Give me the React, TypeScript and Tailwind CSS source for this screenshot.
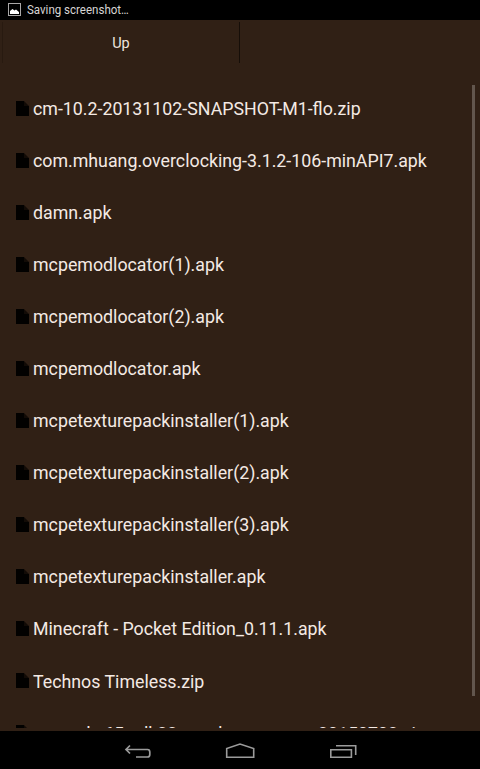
const files = [
  'cm-10.2-20131102-SNAPSHOT-M1-flo.zip',
  'com.mhuang.overclocking-3.1.2-106-minAPI7.apk',
  'damn.apk',
  'mcpemodlocator(1).apk',
  'mcpemodlocator(2).apk',
  'mcpemodlocator.apk',
  'mcpetexturepackinstaller(1).apk',
  'mcpetexturepackinstaller(2).apk',
  'mcpetexturepackinstaller(3).apk',
  'mcpetexturepackinstaller.apk',
  'Minecraft - Pocket Edition_0.11.1.apk',
  'Technos Timeless.zip',
  'xposed-v65-sdk22-arm-by-romracer-20150702.zip',
];

function FileIcon() {
  return (
    <svg className="mb-[2px] h-[15px] w-[13px] shrink-0" viewBox="0 0 13 15">
      <path d="M0 0H8V5H13V15H0Z" fill="#020100" />
      <path d="M8 0L13 5H8Z" fill="#120b06" />
    </svg>
  );
}

function StatusBar() {
  return (
    <div className="flex h-5 shrink-0 items-center bg-black pl-2">
      <svg className="mb-px h-[13px] w-[13px]" viewBox="0 0 13 13">
        <rect x="0.5" y="0.5" width="12" height="12" fill="none" stroke="#aaa8a8" />
        <path d="M2 11V8L4.5 6L6.5 7.5L8 6.5L11 9V11Z" fill="#fff" />
      </svg>
      <span className="ml-1.5 origin-left scale-x-[0.96] text-[12px] leading-5 text-[#d8d5d4]">
        Saving screenshot…
      </span>
    </div>
  );
}

function NavBar() {
  return (
    <div className="flex h-[38px] shrink-0 items-start bg-black pl-[124px] pt-[11px]">
      <svg className="h-[18px] w-7" viewBox="0 0 28 18" fill="none" stroke="#9b9b9b" strokeWidth="1.7">
        <path d="M6 3.5L2 7.5L6 11.5M2 7.5H23.5Q25.8 7.5 25.8 10V12.5Q25.8 15 23.5 15H12" />
      </svg>
      <svg className="ml-[73px] h-[18px] w-[30px]" viewBox="0 0 30 18" fill="none" stroke="#9b9b9b" strokeWidth="1.6">
        <path d="M1.7 15.2V6.5L15 2L28.7 6.5V15.2Z" />
      </svg>
      <svg className="ml-[74px] h-[18px] w-7" viewBox="0 0 28 18" fill="none" stroke="#9b9b9b" strokeWidth="1.6">
        <path d="M1.8 7.7H22.4V15.3H1.8ZM7 3.8H26.7V13" />
      </svg>
    </div>
  );
}

export default function App() {
  return (
    <div className="flex h-[769px] w-[480px] flex-col overflow-hidden bg-[#302015] font-['Roboto','Liberation_Sans',sans-serif]">
      <StatusBar />
      <div className="flex h-[43px] shrink-0 pl-[2px] pt-[2px]">
        <button className="w-[238px] border-x border-l-[#281a10] border-r-[#160e08] text-[14.5px] leading-[42px] text-[#eee4de]">
          <span className="block pt-px">Up</span>
        </button>
      </div>
      <div className="flex h-[665px] shrink-0 overflow-hidden pt-[20px]">
        <ul className="h-[645px] flex-1 overflow-hidden">
          {files.map((file) => (
            <li key={file} className="flex h-[52.08px] items-center gap-1 pl-4 text-[18.5px] text-[#f4eae4]">
              <FileIcon />
              <span className="origin-left scale-x-[0.961] whitespace-nowrap pt-px">{file}</span>
            </li>
          ))}
        </ul>
        <div className="mr-[5px] mt-[2px] h-[611px] w-[3px] bg-[#62564d]" />
      </div>
      <div className="h-[3px] shrink-0 bg-[#302015]" />
      <NavBar />
    </div>
  );
}
